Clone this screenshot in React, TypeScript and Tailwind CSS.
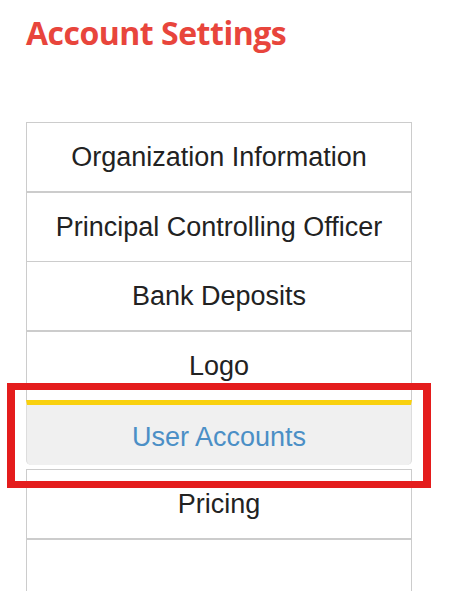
import React from 'react';

const items = [
  { label: 'Organization Information', cls: 'h-[69px] border-t' },
  { label: 'Principal Controlling Officer', cls: 'h-[70px] border-t-2' },
  { label: 'Bank Deposits', cls: 'h-[69px] border-t' },
  { label: 'Logo', cls: 'h-[70px] border-t-2' },
];

const App: React.FC = () => {
  return (
    <div className="relative min-h-[591px] overflow-hidden bg-white">
      <h1 className="pl-[26px] pt-[11px] font-['Open_Sans',sans-serif] text-[32px] font-bold leading-[44px] tracking-[-0.5px] text-[#e8453c]">
        Account Settings
      </h1>

      <ul className="ml-[26px] mt-[67px] w-[386px] font-['Liberation_Sans',Arial,sans-serif] text-[27px] text-[#222]">
        {items.map((item) => (
          <li
            key={item.label}
            className={`flex items-center justify-center border-x border-[#cccccc] ${item.cls}`}
          >
            {item.label}
          </li>
        ))}
        {/* active tab */}
        <li className="mb-[4px] flex h-[65px] items-center justify-center rounded-b-[5px] border-x border-t-[5px] border-x-[#dddddd] border-t-[#f9d10f] bg-[#f0f0f0] pt-[4px] text-[#4b8fc6]">
          User Accounts
        </li>
        <li className="flex h-[69px] items-center justify-center border-x border-t border-[#cccccc]">
          Pricing
        </li>
        <li className="h-[80px] border-x border-t-2 border-[#cccccc]" />
      </ul>

      {/* annotation box */}
      <div className="pointer-events-none absolute left-[7px] top-[383px] h-[105px] w-[424px] border-x-8 border-y-[7px] border-[#e41c1c]" />
    </div>
  );
};

export default App;
